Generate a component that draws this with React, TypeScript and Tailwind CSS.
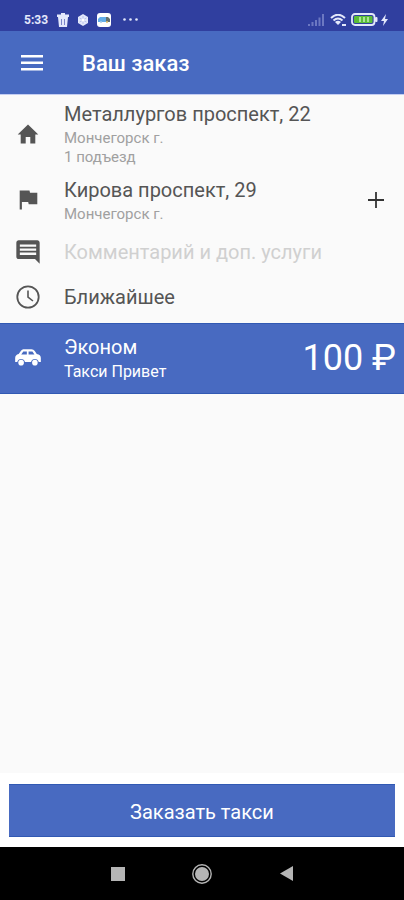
import type { ReactNode } from 'react';

function StatusBar() {
  return (
    <div className="flex h-[31px] items-center justify-between bg-[#303f9f] pt-2 pr-4 pl-6 text-[#e3e8fb]">
      <div className="flex items-center">
        <span className="w-[25px] text-[12px] leading-4 font-bold">5:33</span>
        <svg className="ml-2 h-[14px] w-[12px]" viewBox="0 0 12 14" fill="currentColor" aria-hidden="true">
          <path d="M0 1.500H4V0h4v1.500h4V4H0zM1 4h10l-1 10H2z" />
          <path d="M4.500 6v6M7.500 6v6" stroke="#7a85c9" strokeWidth="1" />
        </svg>
        <svg className="ml-2 h-3 w-3" viewBox="0 0 12 12" aria-hidden="true">
          <path d="M6 0l5 3v6l-5 3-5-3V3z" fill="currentColor" />
          <path d="M6 2v8M2.500 4l7 4M9.500 4l-7 4" stroke="#b9c2ea" strokeWidth="1" />
          <circle cx="6" cy="6" r="1.600" fill="#fff" />
        </svg>
        <svg className="ml-2 h-[14px] w-[14px]" viewBox="0 0 14 14" aria-hidden="true">
          <rect width="14" height="14" rx="3" fill="#fff" />
          <path d="M1 9V6l2-2h6l4 3v2z" fill="#64aee8" />
          <path d="M9 4h2l2 2v3H9z" fill="#64716f" />
          <circle cx="4" cy="9" r="1" fill="#a9cdea" />
          <circle cx="10" cy="9" r="1" fill="#e6c66b" />
        </svg>
        <svg className="ml-3 h-[3px] w-[15px]" viewBox="0 0 15 3" fill="currentColor" aria-hidden="true">
          <circle cx="1.500" cy="1.500" r="1.300" />
          <circle cx="7.500" cy="1.500" r="1.300" />
          <circle cx="13.500" cy="1.500" r="1.300" />
        </svg>
      </div>
      <div className="flex items-center">
        <svg className="h-3 w-4" viewBox="0 0 16 12" fill="#6c78c2" aria-hidden="true">
          <path d="M0 10h2v2H0zM3.500 8h2v4h-2zM7 6h2v6H7zM10.500 3.500h2V12h-2zM14 0h2v12h-2z" />
        </svg>
        <svg className="ml-[6px] h-3 w-[17px]" viewBox="0 0 17 12" fill="none" stroke="currentColor" aria-hidden="true">
          <path d="M1 4Q8 -2.500 15 4M3.500 6.500Q8 2.500 12.500 6.500" strokeWidth="2" />
          <path d="M5 8Q8 5.500 11 8L8 11z" fill="currentColor" stroke="none" />
          <path d="M12 11h4" strokeWidth="2" />
        </svg>
        <svg className="ml-1 h-[13px] w-[27px]" viewBox="0 0 27 13" aria-hidden="true">
          <rect x="1" y="1" width="22.500" height="11" rx="3" fill="#303f9f" stroke="#e3e8fb" strokeWidth="1.800" />
          <rect x="24" y="4" width="2.500" height="5" rx="1" fill="#e3e8fb" />
          <rect x="3" y="3" width="18.500" height="7" rx="1" fill="#59bd38" />
          <path d="M9 4v5M13 4v5M17 4v5" stroke="#c6edb8" strokeWidth="1.500" />
        </svg>
        <svg className="ml-[3px] h-3 w-[7px]" viewBox="0 0 7 12" fill="currentColor" aria-hidden="true">
          <path d="M5 0L0 7h3l-1 5 5-7H4z" />
        </svg>
      </div>
    </div>
  );
}

function Icon({ children, size = 'size-6' }: { children: ReactNode; size?: string }) {
  return (
    <span className="flex w-6 shrink-0 items-center justify-center">
      <svg className={`${size} shrink-0`} viewBox="0 0 24 24" fill="currentColor" aria-hidden="true">
        {children}
      </svg>
    </span>
  );
}

function Address({ icon, title, lines }: { icon: ReactNode; title: string; lines: string[] }) {
  return (
    <button type="button" className="flex min-w-0 grow items-center gap-6 pt-[5px] pb-1 pl-4 text-left">
      {icon}
      <span className="min-w-0">
        <span className="mb-px block text-[20px] leading-7">{title}</span>
        {lines.map((line) => (
          <span key={line} className="block text-[15px] leading-[19px] text-[#a0a0a0]">
            {line}
          </span>
        ))}
      </span>
    </button>
  );
}

export default function App() {
  return (
    <div className="flex min-h-screen flex-col bg-[#fafafa] font-['Roboto','Noto_Sans',sans-serif] text-[#555]">
      <StatusBar />
      <header className="flex h-16 items-center border-b border-[#c3cdf2] bg-[#486ac1] pl-5 text-white">
        <button type="button" aria-label="Меню" className="flex h-10 w-6 items-center justify-center">
          <svg className="h-4 w-[22px]" viewBox="0 0 22 16" fill="currentColor" aria-hidden="true">
            <path d="M0 0h22v2.500H0zM0 6.500h22V9H0zM0 13h22v2.500H0z" />
          </svg>
        </button>
        <h1 className="ml-[38px] pt-[3px] text-[22px] leading-7 font-medium">Ваш заказ</h1>
      </header>

      <main className="grow">
        <div className="flex">
          <Address
            title="Металлургов проспект, 22"
            lines={['Мончегорск г.', '1 подъезд']}
            icon={
              <Icon>
                <path d="M9.700 21.500v-6.500h4.600v6.500h5v-9h3L12 2.500 1.700 12.500h3v9z" />
              </Icon>
            }
          />
        </div>
        <div className="flex items-center pr-4">
          <Address
            title="Кирова проспект, 29"
            lines={['Мончегорск г.']}
            icon={
              <Icon>
                <path d="M14 4.800L13.500 2.500H3.700v19h2.200v-7.500h6.300l.5 2.200h8.600V4.800z" />
              </Icon>
            }
          />
          <button type="button" aria-label="Добавить адрес" className="flex size-6 items-center justify-center">
            <svg className="size-4" viewBox="0 0 16 16" aria-hidden="true">
              <path d="M8 0v16M0 8h16" stroke="#333" strokeWidth="1.800" />
            </svg>
          </button>
        </div>
        <label className="flex items-center gap-6 px-4 pt-[10px] pb-2">
          <Icon size="size-7">
            <path d="M21.990 4c0-1.100-.89-2-1.990-2H4c-1.100 0-2 .9-2 2v12c0 1.100.9 2 2 2h14l4 4-.01-18zM19 14.500H5v-2h14v2zm0-3.500H5V9h14v2zm0-3.500H5v-2h14v2z" />
          </Icon>
          <input
            type="text"
            aria-label="Комментарий и доп. услуги"
            placeholder="Комментарий и доп. услуги"
            className="h-7 min-w-0 grow bg-transparent text-[20px] leading-7 outline-none placeholder:text-[#d0d0d0]"
          />
        </label>
        <button type="button" className="mb-[3px] flex w-full items-center gap-6 px-4 py-[9px] text-left">
          <Icon>
            <circle cx="12" cy="12" r="10.700" fill="none" stroke="currentColor" strokeWidth="1.800" />
            <path d="M12 5.500V12l5 4" fill="none" stroke="currentColor" strokeWidth="1.600" />
          </Icon>
          <span className="text-[20px] leading-7">Ближайшее</span>
        </button>
        <button
          type="button"
          className="flex w-full items-center gap-6 border-y border-[#3159b3] bg-[#486ac1] pt-[9px] pb-[11px] pr-2 pl-4 text-left text-white"
        >
          <Icon size="size-7">
            <path
              fillRule="evenodd"
              d="M8 4.500h7q1.800 0 2.800 1.500l1.700 2.500q3.500.5 3.500 3.500v3.500h-1.800a3.400 3.400 0 0 0-6.600 0H9.400a3.400 3.400 0 0 0-6.600 0H1V12q0-2.800 3-3.500l2-2.700q.8-1.300 2-1.300zm0 2L6.200 9H11V6.500zm4.500 0V9h5l-1.700-2.500z"
            />
            <circle cx="6.100" cy="16" r="2.400" />
            <circle cx="17.900" cy="16" r="2.400" />
          </Icon>
          <span className="grow">
            <span className="block text-[20px] leading-7">Эконом</span>
            <span className="block text-[16px] leading-[21px]">Такси Привет</span>
          </span>
          <span className="text-[36px] leading-10 whitespace-nowrap">100 ₽</span>
        </button>
      </main>

      <footer className="bg-white px-[9px] pt-[11px] pb-[10px]">
        <button type="button" className="block h-[53px] w-full border-y border-[#3159b3] bg-[#486ac1] pt-[2px] text-[20px] leading-7 text-white">
          Заказать такси
        </button>
      </footer>

      <nav className="flex h-[53px] items-center justify-center gap-[60px] bg-black text-[#b5b5b5]">
        <button type="button" aria-label="Недавние" className="flex size-6 items-center justify-center">
          <svg className="size-[14px]" viewBox="0 0 14 14" fill="currentColor" aria-hidden="true">
            <path d="M0 0h14v14H0z" />
          </svg>
        </button>
        <button type="button" aria-label="Домой" className="flex size-6 items-center justify-center">
          <svg className="size-5" viewBox="0 0 20 20" fill="currentColor" aria-hidden="true">
            <circle cx="10" cy="10" r="7" />
            <circle cx="10" cy="10" r="9.200" fill="none" stroke="currentColor" strokeWidth="1.400" />
          </svg>
        </button>
        <button type="button" aria-label="Назад" className="flex size-6 items-center justify-center">
          <svg className="h-[15px] w-[13px]" viewBox="0 0 13 15" fill="currentColor" aria-hidden="true">
            <path d="M13 0v15L0 7.500z" />
          </svg>
        </button>
      </nav>
    </div>
  );
}
